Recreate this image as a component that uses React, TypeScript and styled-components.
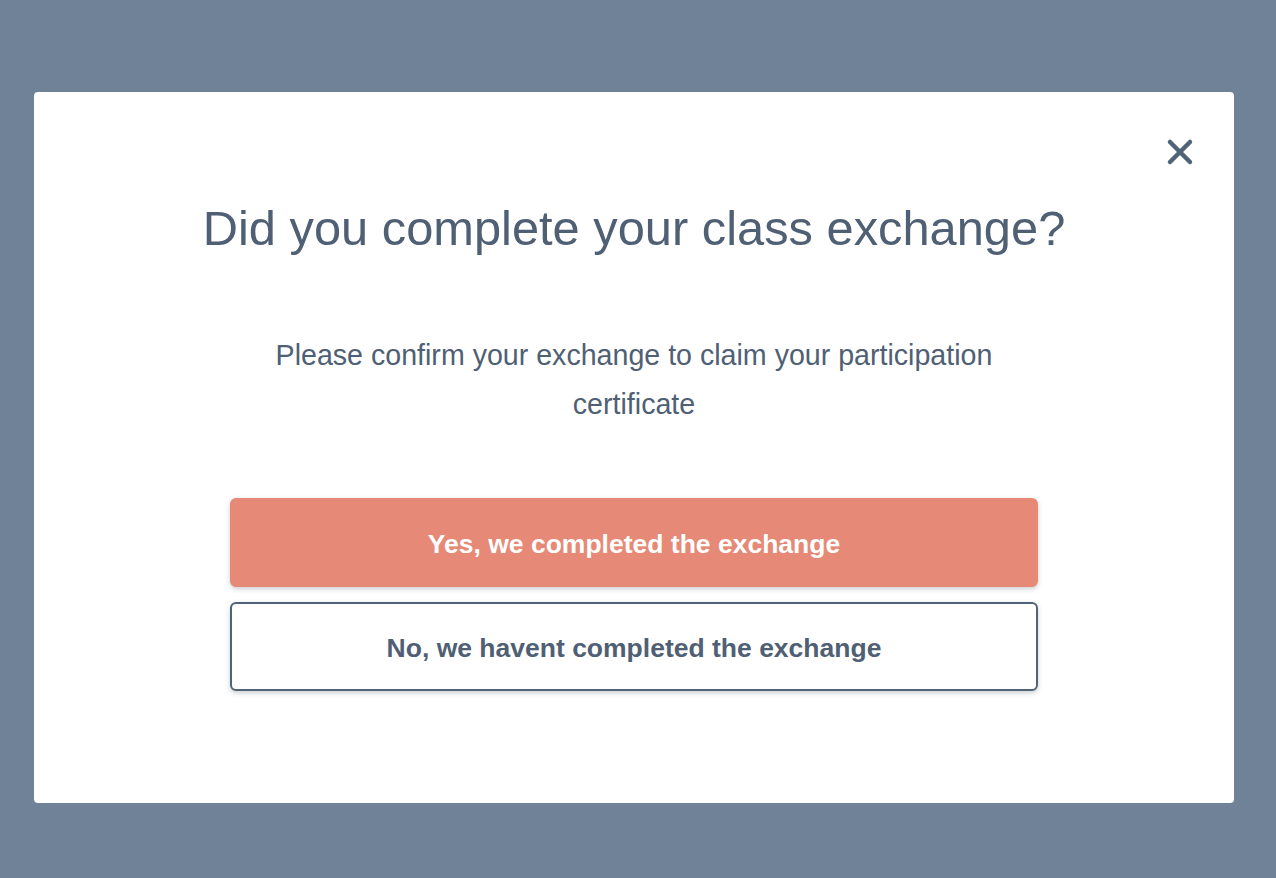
import React from 'react'
import styled, { createGlobalStyle } from 'styled-components'

const GlobalStyle = createGlobalStyle`
html, body {
  margin: 0;
  padding: 0;
  height: 100%;
  background-color: #6f8298;
}
body {
  font-family: "Liberation Sans", Arial, Helvetica, sans-serif;
}
`

const Backdrop = styled.div`
min-height: 878px;
box-sizing: border-box;
padding: 92px 42px 0 34px;
background-color: #6f8298;
`

const Modal = styled.div`
position: relative;
width: 1200px;
height: 711px;
box-sizing: border-box;
padding: 107px 0 0;
background-color: #fff;
border-radius: 4px;
display: flex;
flex-direction: column;
align-items: center;
`

const CloseButton = styled.button`
position: absolute;
top: 44px;
right: 38px;
width: 32px;
height: 32px;
padding: 0;
border: none;
background: transparent;
cursor: pointer;
display: flex;
align-items: center;
justify-content: center;
`

const Title = styled.h1`
margin: 0;
font-size: 48.8px;
line-height: 58px;
font-weight: 400;
color: #4f6074;
text-align: center;
`

const Message = styled.p`
width: 808px;
margin: 74px 0 0;
font-size: 28.6px;
line-height: 49px;
color: #4f6074;
text-align: center;
`

const Actions = styled.div`
width: 808px;
margin-top: 69px;
display: flex;
flex-direction: column;
gap: 15px;
`

const ActionButton = styled.button<{ $primary?: boolean }>`
height: 89px;
box-sizing: border-box;
padding: 4px 0 0;
border-radius: 6px;
border: ${p => p.$primary ? '2px solid #e68976' : '2px solid #516377'};
background-color: ${p => p.$primary ? '#e68976' : '#fff'};
color: ${p => p.$primary ? '#fff' : '#4f6074'};
font-family: "Liberation Sans", Arial, Helvetica, sans-serif;
font-size: 26.5px;
font-weight: 700;
box-shadow: 0 2px 5px rgba(45, 62, 80, 0.25);
cursor: pointer;
`

export default function App() {
  return <>
    <GlobalStyle />
    <Backdrop>
      <Modal>
        <CloseButton aria-label='Close'>
          <svg width='28' height='28' viewBox='0 0 28 28'>
            <path d='M4 4 L24 24 M24 4 L4 24' stroke='#516377' strokeWidth='4.5' strokeLinecap='round' />
          </svg>
        </CloseButton>
        <Title>Did you complete your class exchange?</Title>
        <Message>Please confirm your exchange to claim your participation certificate</Message>
        <Actions>
          <ActionButton $primary>Yes, we completed the exchange</ActionButton>
          <ActionButton>No, we havent completed the exchange</ActionButton>
        </Actions>
      </Modal>
    </Backdrop>
  </>
}
